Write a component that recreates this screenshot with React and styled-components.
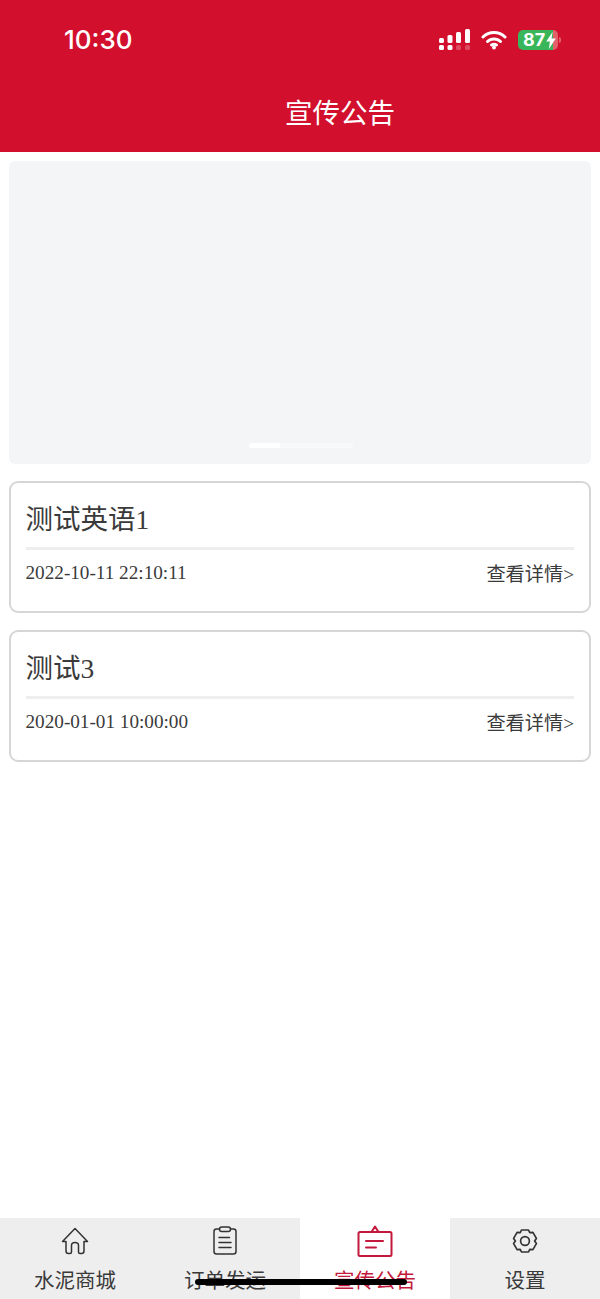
import React from 'react';
import styled, { createGlobalStyle } from 'styled-components';

const GlobalStyle = createGlobalStyle`
  html, body {
    margin: 0;
    padding: 0;
    background: #ffffff;
  }
  * {
    box-sizing: border-box;
  }
`;

const Page = styled.div`
  position: relative;
  width: 600px;
  height: 1299px;
  display: flex;
  flex-direction: column;
  overflow: hidden;
  background: #ffffff;
  font-family: "Liberation Serif", "Noto Sans CJK SC", serif;
`;

const Header = styled.header`
  height: 152px;
  flex: none;
  background: #d20f2d;
  color: #ffffff;
  display: flex;
  flex-direction: column;
`;

const StatusBar = styled.div`
  height: 60px;
  padding: 20px 42px 0 64px;
  display: flex;
  align-items: center;
  justify-content: space-between;
`;

const Clock = styled.span`
  font-family: "Inter", "Liberation Sans", sans-serif;
  font-size: 26px;
  font-weight: 500;
  line-height: 1;
`;

const StatusIcons = styled.div`
  display: flex;
  align-items: center;
  gap: 11px;
`;

const Battery = styled.div`
  position: relative;
  width: 40px;
  height: 20px;
  border-radius: 5px;
  background: linear-gradient(90deg, #39b65a 0 87%, #e2606a 87% 100%);
  color: #ffffff;
  font-family: "Inter", "Liberation Sans", sans-serif;
  font-size: 18px;
  font-weight: 700;
  line-height: 20px;
  padding-left: 5px;
  display: flex;
  align-items: center;
  gap: 1px;
  &::after {
    content: '';
    position: absolute;
    right: -3px;
    top: 7px;
    width: 2px;
    height: 6px;
    border-radius: 0 2px 2px 0;
    background: #e2606a;
  }
`;

const Title = styled.h1`
  margin: 0;
  height: 92px;
  padding: 10px 0 0 80px;
  display: flex;
  align-items: center;
  justify-content: center;
  font-family: "Noto Sans CJK SC", sans-serif;
  font-size: 27.5px;
  font-weight: 400;
`;

const Main = styled.main`
  flex: 1;
  padding: 9px 9px 0;
  display: flex;
  flex-direction: column;
  gap: 17px;
`;

const Banner = styled.div`
  position: relative;
  height: 303px;
  border-radius: 6px;
  background: #f3f5f7;
`;

const Dots = styled.div`
  position: absolute;
  left: 240px;
  bottom: 16px;
  width: 104px;
  height: 5px;
  border-radius: 3px;
  background: linear-gradient(90deg, #ffffff 0 30%, #f8f9fa 30% 100%);
`;

const Card = styled.article`
  height: 132px;
  border: 2px solid #d6d6d6;
  border-radius: 9px;
  background: #ffffff;
  padding: 0 15px 0 14.5px;
  display: flex;
  flex-direction: column;
`;

const CardTitle = styled.h2`
  margin: 0;
  height: 67px;
  padding-top: 3px;
  display: flex;
  align-items: center;
  font-size: 27.5px;
  font-weight: 400;
  color: #3a3a3a;
  border-bottom: 3px solid #eeeeee;
`;

const CardFooter = styled.div`
  flex: 1;
  padding-bottom: 15px;
  display: flex;
  align-items: center;
  justify-content: space-between;
  font-size: 19.2px;
  color: #3a3a3a;
`;

const TabBar = styled.nav`
  height: 81px;
  flex: none;
  display: grid;
  grid-template-columns: repeat(4, 1fr);
`;

const Tab = styled.div`
  display: flex;
  flex-direction: column;
  align-items: center;
  padding-top: 4px;
  background: ${({ $active }) => ($active ? '#ffffff' : '#eeeeee')};
  color: ${({ $active }) => ($active ? '#c2193d' : '#3a3a3a')};
  font-family: "Noto Sans CJK SC", sans-serif;
  font-size: 20.5px;
  line-height: 29px;
`;

const IconSlot = styled.div`
  height: 37px;
  display: flex;
  align-items: center;
  justify-content: center;
  margin-bottom: 6px;
`;

const HomeIndicator = styled.div`
  position: absolute;
  left: 195px;
  bottom: 14px;
  width: 212px;
  height: 6px;
  border-radius: 3px;
  background: #000000;
`;

const SignalIcon = () => (
  <svg width="31" height="22" viewBox="0 0 31 22" fill="#fff">
    <rect x="0" y="9" width="5" height="5" rx="1.5" />
    <rect x="8.5" y="6" width="5" height="8" rx="1.5" />
    <rect x="17" y="3" width="5" height="11" rx="1.5" />
    <rect x="26" y="0" width="5" height="14" rx="1.5" />
    <rect x="0" y="16" width="5" height="5" rx="1.5" />
    <rect x="8.5" y="16" width="5" height="5" rx="1.5" />
    <rect x="17" y="16" width="5" height="5" rx="1.5" opacity="0.25" />
    <rect x="26" y="16" width="5" height="5" rx="1.5" opacity="0.25" />
  </svg>
);

const WifiIcon = () => (
  <svg width="26" height="20" viewBox="0 0 26 20" fill="none" stroke="#fff" strokeWidth="3" strokeLinecap="round">
    <path d="M2 7 C8 1 18 1 24 7" />
    <path d="M6.5 11.5 C10 8 16 8 19.5 11.5" />
    <path d="M10.5 15 C12 14 14 14 15.5 15" />
    <circle cx="13" cy="17.5" r="1.2" fill="#fff" strokeWidth="1.5" />
  </svg>
);

const BoltIcon = () => (
  <svg width="10" height="17" viewBox="0 0 9 16" fill="#fff">
    <path d="M6 0 L0 9 H3.5 L2.5 16 L9 6 H5 Z" />
  </svg>
);

const HomeIcon = () => (
  <svg width="28" height="28" viewBox="0 0 28 28" fill="none" stroke="#333" strokeWidth="1.5" strokeLinejoin="round" strokeLinecap="round">
    <path d="M1.5 14.5 L14 1.5 L26.5 14.5 L23 14.5 V24 Q23 26.5 20.5 26.5 H19 Q17.5 26.5 17.5 25 V18.5 Q17.5 15.5 14 15.5 Q10.5 15.5 10.5 18.5 V25 Q10.5 26.5 9 26.5 H7.5 Q5 26.5 5 24 V14.5 Z" />
  </svg>
);

const OrderIcon = () => (
  <svg width="24" height="29" viewBox="0 0 24 29" fill="none" stroke="#333" strokeWidth="1.5" strokeLinecap="round">
    <path d="M6 3 H3.5 Q1 3 1 5.5 V25.5 Q1 28 3.5 28 H20.5 Q23 28 23 25.5 V5.5 Q23 3 20.5 3 H18" />
    <rect x="6.5" y="1" width="11" height="4.5" rx="2.25" />
    <path d="M6 11.5 H16.5 M6 16.5 H18 M6 21.5 H18" />
  </svg>
);

const NoticeIcon = () => (
  <svg width="36" height="32" viewBox="0 0 36 32" fill="none" stroke="#c2193d" strokeWidth="2" strokeLinecap="round" strokeLinejoin="round">
    <rect x="1.5" y="7" width="33" height="24" rx="1.5" />
    <path d="M14.5 7 L18 1.5 L21.5 7" />
    <path d="M9 16 H26 M9 22.5 H19" />
  </svg>
);

const GearIcon = () => (
  <svg width="26" height="26" viewBox="0 0 26 26" fill="none" stroke="#333" strokeWidth="1.7" strokeLinejoin="round">
    <path d="M9.5 2 H16.5 L17.8 4.7 L20.9 4.4 L24.4 10.4 L22.6 13 L24.4 15.6 L20.9 21.6 L17.8 21.3 L16.5 24 H9.5 L8.2 21.3 L5.1 21.6 L1.6 15.6 L3.4 13 L1.6 10.4 L5.1 4.4 L8.2 4.7 Z" />
    <circle cx="13" cy="13" r="4.4" />
  </svg>
);

const notices = [
  { id: 1, title: '测试英语1', time: '2022-10-11 22:10:11' },
  { id: 2, title: '测试3', time: '2020-01-01 10:00:00' },
];

const tabs = [
  { label: '水泥商城', icon: <HomeIcon /> },
  { label: '订单发运', icon: <OrderIcon /> },
  { label: '宣传公告', icon: <NoticeIcon />, active: true },
  { label: '设置', icon: <GearIcon /> },
];

export default function App() {
  return (
    <Page>
      <GlobalStyle />
      <Header>
        <StatusBar>
          <Clock>10:30</Clock>
          <StatusIcons>
            <SignalIcon />
            <WifiIcon />
            <Battery>87<BoltIcon /></Battery>
          </StatusIcons>
        </StatusBar>
        <Title>宣传公告</Title>
      </Header>
      <Main>
        <Banner>
          <Dots />
        </Banner>
        {notices.map((notice) => (
          <Card key={notice.id}>
            <CardTitle>{notice.title}</CardTitle>
            <CardFooter>
              <span>{notice.time}</span>
              <span>查看详情&gt;</span>
            </CardFooter>
          </Card>
        ))}
      </Main>
      <TabBar>
        {tabs.map((tab) => (
          <Tab key={tab.label} $active={tab.active}>
            <IconSlot>{tab.icon}</IconSlot>
            {tab.label}
          </Tab>
        ))}
      </TabBar>
      <HomeIndicator />
    </Page>
  );
}
